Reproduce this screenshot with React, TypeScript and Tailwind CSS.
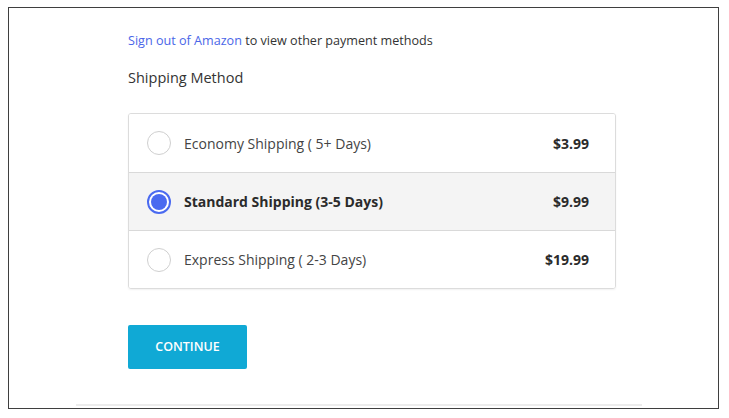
import { useState } from 'react'

const options = [
  { id: 'economy', label: 'Economy Shipping ( 5+ Days)', price: '$3.99' },
  { id: 'standard', label: 'Standard Shipping (3-5 Days)', price: '$9.99' },
  { id: 'express', label: 'Express Shipping ( 2-3 Days)', price: '$19.99' },
]

export default function App() {
  const [selected, setSelected] = useState('standard')

  return (
    <div className="h-[418px] w-[729px] bg-white pl-2 pt-[7px] font-['Open_Sans',sans-serif]">
      <div className="flex h-[402px] w-[711px] flex-col border border-[#3f3f3f] pl-[119px]">
        <p className="mt-[24px] text-[12.6px] leading-[18px] text-[#333]">
          <a href="#" className="text-[#4a66e8]">Sign out of Amazon</a> to view other payment methods
        </p>
        <h2 className="mt-[18px] text-[14.5px] leading-[20px] text-[#333]">Shipping Method</h2>

        <div className="mt-[25px] w-[488px] overflow-hidden rounded-[3px] border border-[#dcdcdc] shadow-[0_1px_2px_rgba(0,0,0,0.06)]">
          {options.map((o, i) => {
            const active = selected === o.id
            return (
              <button
                key={o.id}
                type="button"
                onClick={() => setSelected(o.id)}
                className={`flex h-[58px] w-full items-center pl-[18px] pr-[26px] text-left ${
                  i > 0 ? 'border-t border-[#d9d9d9]' : ''
                } ${active ? 'bg-[#f4f4f4]' : 'bg-white'}`}
              >
                {active ? (
                  <span className="flex h-[24px] w-[24px] items-center justify-center rounded-full border-2 border-[#4a6af0] bg-white">
                    <span className="h-[16px] w-[16px] rounded-full bg-[#4a6af0]" />
                  </span>
                ) : (
                  <span className="h-[24px] w-[24px] rounded-full border border-[#cfcfcf] bg-white" />
                )}
                <span
                  className={`ml-[13px] flex-1 text-[14px] ${
                    active ? 'font-bold text-[#2b2b2b]' : 'text-[#444]'
                  }`}
                >
                  {o.label}
                </span>
                <span className="text-[14px] font-bold text-[#2b2b2b]">{o.price}</span>
              </button>
            )
          })}
        </div>

        <button
          type="button"
          className="mt-[36px] h-[44px] w-[119px] rounded-[2px] bg-[#10a9d5] text-[12.5px] font-semibold text-white"
        >
          CONTINUE
        </button>

        <div className="mt-auto mb-[2px] -ml-[52px] h-[2px] w-[566px] bg-[#ececec]" />
      </div>
    </div>
  )
}
